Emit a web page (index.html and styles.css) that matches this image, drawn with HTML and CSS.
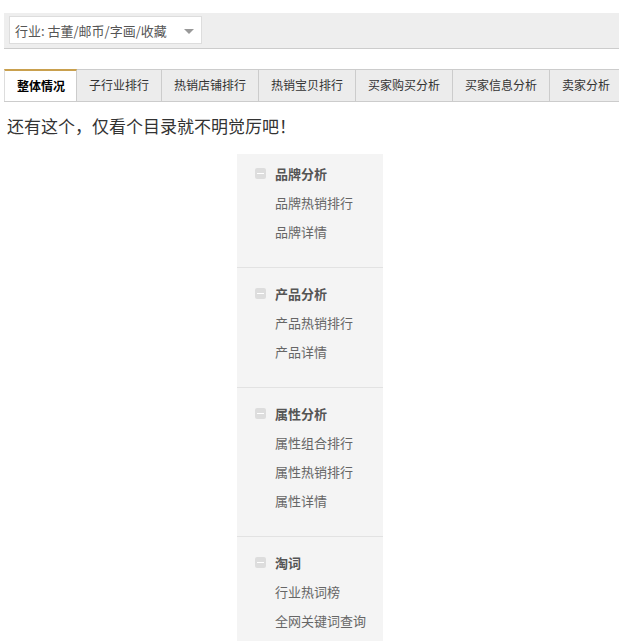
FILE: index.html
```html
<!DOCTYPE html>
<html lang="zh-CN">
<head>
    <meta charset="UTF-8">
    <title>行业分析</title>
    <link rel="stylesheet" href="styles.css">
</head>
<body>
    <div class="page">
        <div class="filter-bar">
            <div class="select">
                <span>行业: 古董/邮币/字画/收藏</span>
                <span class="caret"></span>
            </div>
        </div>

        <ul class="tabs">
            <li class="active">整体情况</li>
            <li>子行业排行</li>
            <li>热销店铺排行</li>
            <li>热销宝贝排行</li>
            <li>买家购买分析</li>
            <li>买家信息分析</li>
            <li>卖家分析</li>
        </ul>

        <p class="intro">还有这个，仅看个目录就不明觉厉吧！</p>

        <div class="menu">
            <div class="group first">
                <div class="group-title"><span class="minus"></span>品牌分析</div>
                <div class="item">品牌热销排行</div>
                <div class="item">品牌详情</div>
            </div>
            <div class="group">
                <div class="group-title"><span class="minus"></span>产品分析</div>
                <div class="item">产品热销排行</div>
                <div class="item">产品详情</div>
            </div>
            <div class="group">
                <div class="group-title"><span class="minus"></span>属性分析</div>
                <div class="item">属性组合排行</div>
                <div class="item">属性热销排行</div>
                <div class="item">属性详情</div>
            </div>
            <div class="group">
                <div class="group-title"><span class="minus"></span>淘词</div>
                <div class="item">行业热词榜</div>
                <div class="item">全网关键词查询</div>
            </div>
        </div>
    </div>
</body>
</html>
```

FILE: styles.css
```css
body {
    margin: 0;
    background: #fff;
    font-family: "Noto Sans CJK SC", "DejaVu Sans", sans-serif;
    color: #333;
    overflow: hidden;
}
.page {
    width: 615px;
    margin-left: 4px;
}
.filter-bar {
    margin-top: 13px;
    height: 32px;
    padding: 3px 0 0 5px;
    background: #eee;
    border-bottom: 1px solid #ccc;
}
.select {
    width: 189px;
    height: 26px;
    background: #fff;
    border: 1px solid #ddd;
    display: flex;
    align-items: center;
    justify-content: space-between;
    padding: 0 7px 0 5px;
    box-sizing: content-box;
    width: 179px;
    font-size: 13px;
    color: #555;
}
.caret {
    width: 0;
    height: 0;
    border-left: 5px solid transparent;
    border-right: 5px solid transparent;
    border-top: 5px solid #999;
    margin-top: 2px;
}
.tabs {
    list-style: none;
    margin: 20px 0 0;
    padding: 0;
    display: flex;
    overflow: hidden;
    border-bottom: 1px solid #ccc;
    height: 32px;
}
.tabs li {
    flex: none;
    height: 31px;
    line-height: 30px;
    padding: 0 12px;
    font-size: 12px;
    color: #333;
    background: #ececec;
    border-top: 1px solid #ccc;
    border-right: 1px solid #ccc;
    box-sizing: border-box;
    height: 32px;
}
.tabs li.active {
    background: #fff;
    border-top: 2px solid #c9a04e;
    border-left: 1px solid #ddd;
    border-right: 1px solid #ccc;
    height: 33px;
    font-weight: bold;
    color: #000;
    padding: 0 11px 0 12px;
}
.intro {
    margin: 12px 0 0 3px;
    font-size: 17px;
    line-height: 24px;
    color: #333;
}
.menu {
    width: 146px;
    margin: 16px 0 0 233px;
    background: #f4f4f4;
}
.group {
    padding: 11px 0 21px;
    border-top: 1px solid #e2e2e2;
}
.group.first {
    border-top: none;
    padding-top: 5px;
}
.group-title,
.item {
    height: 29px;
    line-height: 29px;
    font-size: 13px;
    padding-left: 38px;
}
.group-title {
    position: relative;
    font-weight: bold;
    color: #555;
}
.item {
    color: #666;
}
.minus {
    position: absolute;
    left: 18px;
    top: 9px;
    width: 11px;
    height: 11px;
    border-radius: 2px;
    background: #ddd;
}
.minus::after {
    content: "";
    position: absolute;
    left: 2px;
    top: 5px;
    width: 7px;
    height: 1px;
    background: #fff;
}
```
